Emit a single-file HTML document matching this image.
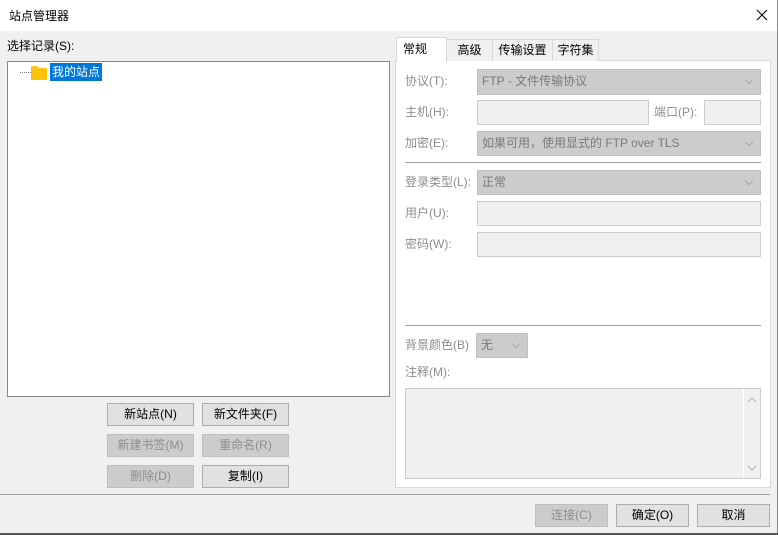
<!DOCTYPE html>
<html><head><meta charset="utf-8">
<style>
*{box-sizing:border-box;margin:0;padding:0}
body{width:778px;height:535px;overflow:hidden;background:#f0f0f0;font-family:"Liberation Sans","Noto Sans CJK SC",sans-serif;font-size:12px;color:#000;position:relative}
.a{position:absolute}
.title{left:0;top:0;width:778px;height:31px;background:#fff}
.lbl{color:#8d8d8d;white-space:nowrap;line-height:16px}
.btn{position:absolute;height:23px;background:#e1e1e1;border:1px solid #adadad;text-align:center;line-height:21px;font-size:12px}
.btn.d{background:#ccc;border-color:#bfbfbf;color:#8d8d8d}
.combo{position:absolute;background:#ccc;border:1px solid #bfbfbf;color:#7a7a7a;line-height:23px;padding-left:4px;white-space:nowrap}
.combo:after{content:"";position:absolute;right:8px;top:7px;width:5px;height:5px;border-right:1px solid #a8a8a8;border-bottom:1px solid #a8a8a8;transform:rotate(45deg)}
.inp{position:absolute;background:#f0f0f0;border:1px solid #ccc}
.tab{position:absolute;top:39px;height:22px;background:#f0f0f0;border:1px solid #d9d9d9;border-bottom:none;text-align:center;line-height:20px}
</style></head><body>
<div class="a title"></div>
<div class="a" style="left:9px;top:7px;font-size:12px">站点管理器</div>
<svg class="a" style="left:756px;top:9px" width="12" height="12"><path d="M1 1L11 11M11 1L1 11" stroke="#000" stroke-width="1.1"/></svg>
<div class="a" style="left:777px;top:0;width:1px;height:535px;background:#888"></div>

<div class="a" style="left:7px;top:37px">选择记录(S):</div>
<div class="a" style="left:7px;top:61px;width:383px;height:336px;background:#fff;border:1px solid #828790"></div>
<div class="a" style="left:20px;top:72px;width:11px;border-top:1px dotted #777"></div>
<svg class="a" style="left:31px;top:65px" width="16" height="15"><path d="M0 1h6l2 2h8v12H0z" fill="#fcc62a"/><path d="M0 4h16v11H0z" fill="#ffc107"/></svg>
<div class="a" style="left:50px;top:63px;width:52px;height:18px;background:#0078d7;color:#fff;line-height:18px;padding-left:2px">我的站点</div>

<div class="btn" style="left:107px;top:403px;width:87px">新站点(N)</div>
<div class="btn" style="left:202px;top:403px;width:87px">新文件夹(F)</div>
<div class="btn d" style="left:107px;top:434px;width:87px">新建书签(M)</div>
<div class="btn d" style="left:202px;top:434px;width:87px">重命名(R)</div>
<div class="btn d" style="left:107px;top:465px;width:87px">删除(D)</div>
<div class="btn" style="left:202px;top:465px;width:87px">复制(I)</div>

<div class="a" style="left:395px;top:60px;width:376px;height:428px;background:#fff;border:1px solid #d9d9d9"></div>
<div class="tab" style="left:446px;width:47px">高级</div>
<div class="tab" style="left:492px;width:61px">传输设置</div>
<div class="tab" style="left:552px;width:47px">字符集</div>
<div class="a" style="left:396px;top:37px;width:51px;height:25px;background:#fff;border:1px solid #d9d9d9;border-bottom:none;line-height:22px;padding-left:6px">常规</div>

<div class="a lbl" style="left:405px;top:73px">协议(T):</div>
<div class="combo" style="left:477px;top:69px;width:284px;height:26px">FTP - 文件传输协议</div>
<div class="a lbl" style="left:405px;top:104px">主机(H):</div>
<div class="inp" style="left:477px;top:100px;width:172px;height:25px"></div>
<div class="a lbl" style="left:654px;top:104px">端口(P):</div>
<div class="inp" style="left:704px;top:100px;width:57px;height:25px"></div>
<div class="a lbl" style="left:405px;top:135px">加密(E):</div>
<div class="combo" style="left:477px;top:131px;width:284px;height:25px">如果可用，使用显式的 FTP over TLS</div>
<div class="a" style="left:405px;top:162px;width:356px;height:1px;background:#a0a0a0"></div>
<div class="a lbl" style="left:405px;top:174px">登录类型(L):</div>
<div class="combo" style="left:477px;top:170px;width:284px;height:25px">正常</div>
<div class="a lbl" style="left:405px;top:205px">用户(U):</div>
<div class="inp" style="left:477px;top:201px;width:284px;height:25px"></div>
<div class="a lbl" style="left:405px;top:236px">密码(W):</div>
<div class="inp" style="left:477px;top:232px;width:284px;height:25px"></div>
<div class="a" style="left:405px;top:325px;width:356px;height:1px;background:#a0a0a0"></div>
<div class="a lbl" style="left:405px;top:337px">背景颜色(B)</div>
<div class="combo" style="left:476px;top:333px;width:52px;height:25px">无</div>
<div class="a lbl" style="left:405px;top:364px">注释(M):</div>
<div class="inp" style="left:405px;top:388px;width:356px;height:91px"></div>
<div class="a" style="left:743px;top:389px;width:17px;height:89px;background:#f0f0f0;border-left:1px solid #fff"></div>
<svg class="a" style="left:747px;top:396px" width="10" height="80"><path d="M1 6L5 2L9 6" stroke="#b0b0b0" fill="none"/><path d="M1 70L5 74L9 70" stroke="#b0b0b0" fill="none"/></svg>

<div class="a" style="left:0;top:494px;width:770px;height:1px;background:#a0a0a0"></div>
<div class="a" style="left:0;top:533px;width:778px;height:2px;background:#555"></div>
<div class="btn d" style="left:535px;top:504px;width:73px">连接(C)</div>
<div class="btn" style="left:616px;top:504px;width:73px">确定(O)</div>
<div class="btn" style="left:697px;top:504px;width:73px">取消</div>
</body></html>
